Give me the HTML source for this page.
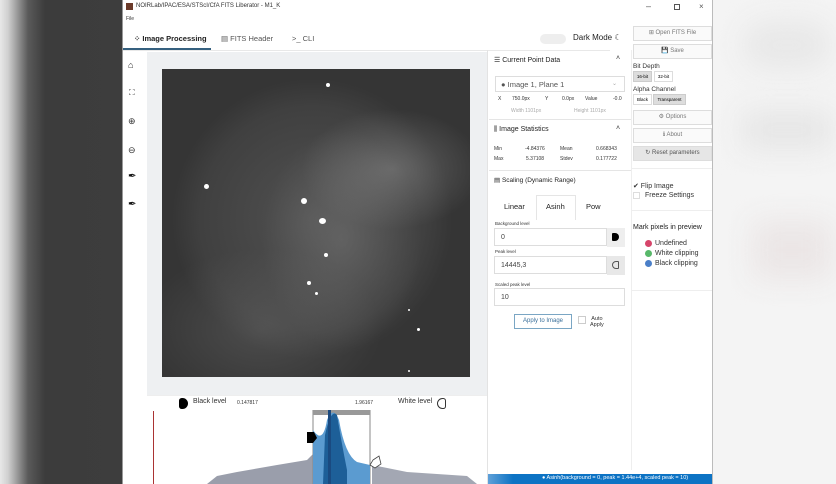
<!DOCTYPE html>
<html><head><meta charset="utf-8"><style>
*{box-sizing:border-box;margin:0;padding:0}
body{width:836px;height:484px;overflow:hidden;position:relative;font-family:"Liberation Sans",sans-serif;background:#f3f3f3}
.abs{position:absolute}
.lbg{left:0;top:0;width:123px;height:484px;background:linear-gradient(90deg,#e8e8e8 0,#d0d0d0 8px,#5a5a5a 28px,#3c3c3c 45px,#3d3d3d 123px)}
.rbg{left:712px;top:0;width:124px;height:484px;background:#f4f4f4}
.win{left:122px;top:0;width:591px;height:484px;background:#fff;border-left:1px solid #999;border-right:1px solid #bbb}
.t{font-size:6px;color:#333;position:absolute;white-space:nowrap}
.btn{position:absolute;left:633px;width:79px;height:15px;border:1px solid #ddd;background:#fafafa;font-size:6px;color:#777;text-align:center;line-height:13px}
.star{position:absolute;border-radius:50%;background:#fff}
.inp{position:absolute;left:494px;width:131px;height:18px;border:1px solid #ddd;background:#fff;font-size:7px;color:#444;padding:5px 6px}
</style></head><body>
<div class="abs lbg"></div>
<div class="abs rbg">
<div class="abs" style="left:30px;top:20px;width:90px;height:50px;background:#e8e8e8;filter:blur(14px);border-radius:30px"></div>
<div class="abs" style="left:30px;top:110px;width:90px;height:40px;background:#e6e6e6;filter:blur(14px)"></div>
<div class="abs" style="left:40px;top:220px;width:80px;height:60px;background:#ebe6e6;filter:blur(14px)"></div>
</div>
<div class="abs win"></div>
<!-- title -->
<div class="abs" style="left:126px;top:3px;width:7px;height:7px;background:#6b3a2a"></div>
<div class="t" style="left:136px;top:3px;font-size:6px">NOIRLab/IPAC/ESA/STScI/CfA FITS Liberator - M1_K</div>
<div class="t" style="left:646px;top:1px;font-size:9px;color:#555">–</div>
<div class="abs" style="left:674px;top:4px;width:6px;height:6px;border:1px solid #555"></div>
<div class="t" style="left:699px;top:2px;font-size:8px;color:#555">×</div>
<div class="t" style="left:126px;top:16px;font-size:5px">File</div>
<!-- tabs -->
<div class="t" style="left:134px;top:34px;font-size:7.5px;color:#222;font-weight:bold">⁘ Image Processing</div>
<div class="abs" style="left:123px;top:48px;width:88px;height:2px;background:#35607f"></div>
<div class="t" style="left:221px;top:34px;font-size:7.5px;color:#555">▤ FITS Header</div>
<div class="t" style="left:292px;top:34px;font-size:7.5px;color:#555">&gt;_ CLI</div>
<div class="abs" style="left:123px;top:50px;width:487px;height:1px;background:#e8e8e8"></div>
<div class="abs" style="left:540px;top:34px;width:26px;height:10px;border-radius:5px;background:#eee"></div>
<div class="t" style="left:573px;top:33px;font-size:8px;color:#222">Dark Mode ☾</div>
<!-- sidebar icons -->
<div class="t" style="left:128px;top:60px;font-size:9px;color:#222">⌂</div>
<div class="t" style="left:129px;top:88px;font-size:8px;color:#333">⛶</div>
<div class="t" style="left:128px;top:116px;font-size:9px;color:#333">⊕</div>
<div class="t" style="left:128px;top:145px;font-size:9px;color:#333">⊖</div>
<div class="t" style="left:128px;top:171px;font-size:10px;color:#111">✒</div>
<div class="t" style="left:128px;top:199px;font-size:10px;color:#111">✒</div>
<!-- image area -->
<div class="abs" style="left:147px;top:52px;width:340px;height:343px;background:#eef0f2"></div>
<div class="abs" style="left:162px;top:69px;width:308px;height:308px;overflow:hidden;background:
radial-gradient(ellipse 90px 60px at 230px 100px,rgba(150,150,150,.45),transparent),
radial-gradient(ellipse 80px 110px at 180px 170px,rgba(130,130,130,.4),transparent),
radial-gradient(ellipse 120px 80px at 100px 260px,rgba(120,120,120,.35),transparent),
radial-gradient(ellipse 140px 140px at 150px 150px,#515151,#404040 80%,#353535)">
<div class="star" style="left:164px;top:14px;width:4px;height:4px"></div>
<div class="star" style="left:42px;top:115px;width:5px;height:5px"></div>
<div class="star" style="left:139px;top:129px;width:6px;height:6px"></div>
<div class="star" style="left:157px;top:149px;width:7px;height:6px"></div>
<div class="star" style="left:162px;top:184px;width:4px;height:4px"></div>
<div class="star" style="left:145px;top:212px;width:4px;height:4px"></div>
<div class="star" style="left:153px;top:223px;width:3px;height:3px"></div>
<div class="star" style="left:255px;top:259px;width:3px;height:3px"></div>
<div class="star" style="left:246px;top:240px;width:2px;height:2px"></div>
<div class="star" style="left:246px;top:301px;width:2px;height:2px"></div>
</div>
<!-- histogram -->
<div class="abs" style="left:147px;top:395px;width:340px;height:89px;background:#fff;border-top:1px solid #eee"></div>
<div class="abs" style="left:179px;top:398px;width:9px;height:11px;background:#000;border-radius:3px 6px 6px 3px"></div>
<div class="t" style="left:193px;top:398px;font-size:7px">Black level</div>
<div class="t" style="left:237px;top:400px;font-size:5px">0.147817</div>
<div class="t" style="left:355px;top:400px;font-size:5px">1.96167</div>
<div class="t" style="left:398px;top:398px;font-size:7px">White level</div>
<div class="abs" style="left:437px;top:398px;width:9px;height:11px;border:1px solid #333;border-radius:6px 3px 3px 6px"></div>
<div class="abs" style="left:153px;top:411px;width:1px;height:73px;background:#a33"></div>
<svg class="abs" style="left:147px;top:410px" width="340" height="74">
<path d="M60 74 L70 66 L90 62 L130 55 L160 50 L166 44 L166 74Z" fill="#9a9eab"/>
<path d="M225 74 L225 55 L260 62 L320 66 L330 74Z" fill="#a3a7b3"/>
<rect x="166" y="0" width="57" height="74" fill="#fff" stroke="#888" stroke-width="1"/>
<rect x="166" y="0" width="57" height="5" fill="#999"/>
<path d="M166 74 L166 20 Q176 35 180 10 Q186 -5 192 10 Q198 45 210 52 L223 55 L223 74Z" fill="#5b9bd0"/>
<path d="M176 74 L178 25 Q184 -2 190 5 Q194 30 200 60 L200 74Z" fill="#1d5f98"/>
<rect x="181" y="0" width="3" height="74" fill="#1a4a80"/>
<path d="M160 22 L167 22 L170 28 L166 33 L160 33Z" fill="#000"/>
<path d="M226 50 L232 46 L234 54 L228 58 L223 55Z" fill="#fff" stroke="#444" stroke-width=".8"/>
</svg>
<!-- middle panel -->
<div class="abs" style="left:487px;top:50px;width:1px;height:434px;background:#e3e3e3"></div>
<div class="abs" style="left:631px;top:50px;width:1px;height:420px;background:#eee"></div>
<div class="t" style="left:494px;top:56px;font-size:7px;color:#222">☰ Current Point Data</div>
<div class="t" style="left:616px;top:55px;font-size:7px">˄</div>
<div class="abs" style="left:495px;top:76px;width:130px;height:16px;border:1px solid #ddd"></div>
<div class="t" style="left:501px;top:80px;font-size:7.5px;color:#555">● Image 1, Plane 1</div>
<div class="t" style="left:612px;top:80px;font-size:6px;color:#aaa">⌄</div>
<div class="t" style="left:498px;top:96px;font-size:5px">X</div>
<div class="t" style="left:512px;top:96px;font-size:5px">750.0px</div>
<div class="t" style="left:545px;top:96px;font-size:5px">Y</div>
<div class="t" style="left:562px;top:96px;font-size:5px">0.0px</div>
<div class="t" style="left:585px;top:96px;font-size:5px">Value</div>
<div class="t" style="left:613px;top:96px;font-size:5px">-0.0</div>
<div class="t" style="left:511px;top:108px;font-size:5px;color:#aaa">Width 1101px</div>
<div class="t" style="left:574px;top:108px;font-size:5px;color:#aaa">Height 1101px</div>
<div class="abs" style="left:489px;top:119px;width:142px;height:1px;background:#e5e5e5"></div>
<div class="t" style="left:494px;top:126px;font-size:7px;color:#222">⫼ Image Statistics</div>
<div class="t" style="left:616px;top:125px;font-size:7px">˄</div>
<div class="t" style="left:494px;top:146px;font-size:5px">Min</div>
<div class="t" style="left:525px;top:146px;font-size:5px">-4.84376</div>
<div class="t" style="left:560px;top:146px;font-size:5px">Mean</div>
<div class="t" style="left:596px;top:146px;font-size:5px">0.668343</div>
<div class="t" style="left:494px;top:156px;font-size:5px">Max</div>
<div class="t" style="left:526px;top:156px;font-size:5px">5.37108</div>
<div class="t" style="left:560px;top:156px;font-size:5px">Stdev</div>
<div class="t" style="left:596px;top:156px;font-size:5px">0.177722</div>
<div class="abs" style="left:489px;top:170px;width:142px;height:1px;background:#e5e5e5"></div>
<div class="t" style="left:494px;top:176px;font-size:6.5px;color:#222">▤ Scaling (Dynamic Range)</div>
<div class="abs" style="left:536px;top:195px;width:40px;height:25px;border:1px solid #e5e5e5;border-bottom:none"></div>
<div class="t" style="left:504px;top:202px;font-size:7.5px;color:#222">Linear</div>
<div class="t" style="left:546px;top:202px;font-size:7.5px;color:#222">Asinh</div>
<div class="t" style="left:586px;top:202px;font-size:7.5px;color:#222">Pow</div>
<div class="t" style="left:495px;top:221px;font-size:4.5px">Background level</div>
<div class="inp" style="top:228px;width:113px">0</div>
<div class="abs" style="left:607px;top:228px;width:18px;height:19px;background:#eee"></div>
<div class="abs" style="left:612px;top:233px;width:7px;height:8px;background:#000;border-radius:1px 4px 4px 1px"></div>
<div class="t" style="left:495px;top:249px;font-size:4.5px">Peak level</div>
<div class="inp" style="top:256px;width:113px">14445,3</div>
<div class="abs" style="left:607px;top:256px;width:18px;height:19px;background:#e8e8e8"></div>
<div class="abs" style="left:612px;top:261px;width:7px;height:8px;border:1px solid #555;border-radius:4px 1px 1px 4px"></div>
<div class="t" style="left:495px;top:282px;font-size:4.5px">Scaled peak level</div>
<div class="inp" style="top:288px">10</div>
<div class="abs" style="left:514px;top:314px;width:58px;height:15px;border:1px solid #7aa6c4;font-size:6px;color:#3a6f9a;text-align:center;line-height:13px">Apply to Image</div>
<div class="abs" style="left:578px;top:316px;width:8px;height:8px;border:1px solid #ccc"></div>
<div class="t" style="left:590px;top:316px;font-size:5.5px;text-align:center;line-height:6px">Auto<br>Apply</div>
<!-- right panel -->
<div class="btn" style="top:26px">⊞ Open FITS File</div>
<div class="btn" style="top:44px">💾 Save</div>
<div class="t" style="left:633px;top:63px;font-size:6.5px">Bit Depth</div>
<div class="abs" style="left:633px;top:71px;width:19px;height:11px;background:#ddd;border:1px solid #ccc;font-size:4.5px;text-align:center;line-height:9px">16-bit</div>
<div class="abs" style="left:654px;top:71px;width:19px;height:11px;border:1px solid #ddd;font-size:4.5px;text-align:center;line-height:9px">32-bit</div>
<div class="t" style="left:633px;top:86px;font-size:6.5px">Alpha Channel</div>
<div class="abs" style="left:633px;top:94px;width:19px;height:11px;border:1px solid #ddd;font-size:4.5px;text-align:center;line-height:9px">Black</div>
<div class="abs" style="left:653px;top:94px;width:33px;height:11px;background:#ddd;border:1px solid #ccc;font-size:4.5px;text-align:center;line-height:9px">Transparent</div>
<div class="btn" style="top:110px">⚙ Options</div>
<div class="btn" style="top:128px">ℹ About</div>
<div class="btn" style="top:146px;background:#e6e6e6;color:#555">↻ Reset parameters</div>
<div class="abs" style="left:632px;top:168px;width:80px;height:1px;background:#eee"></div>
<div class="t" style="left:633px;top:182px;font-size:7px">✔ Flip Image</div>
<div class="abs" style="left:633px;top:192px;width:7px;height:7px;border:1px solid #ddd"></div>
<div class="t" style="left:645px;top:192px;font-size:7px">Freeze Settings</div>
<div class="abs" style="left:632px;top:210px;width:80px;height:1px;background:#eee"></div>
<div class="t" style="left:633px;top:224px;font-size:7px;color:#222">Mark pixels in preview</div>
<div class="abs" style="left:645px;top:240px;width:7px;height:7px;border-radius:50%;background:#d6456a"></div>
<div class="t" style="left:655px;top:240px;font-size:7px">Undefined</div>
<div class="abs" style="left:645px;top:250px;width:7px;height:7px;border-radius:50%;background:#58b86a"></div>
<div class="t" style="left:655px;top:250px;font-size:7px">White clipping</div>
<div class="abs" style="left:645px;top:260px;width:7px;height:7px;border-radius:50%;background:#4a7fc8"></div>
<div class="t" style="left:655px;top:260px;font-size:7px">Black clipping</div>
<div class="abs" style="left:632px;top:290px;width:80px;height:1px;background:#eee"></div>
<!-- status bar -->
<div class="abs" style="left:488px;top:474px;width:224px;height:10px;background:linear-gradient(90deg,#5fa0d8,#0d73c4 25px,#0d73c4)"></div>
<div class="t" style="left:542px;top:475px;font-size:5.5px;color:#fff">● Asinh(background = 0, peak = 1.44e+4, scaled peak = 10)</div>
</body></html>
